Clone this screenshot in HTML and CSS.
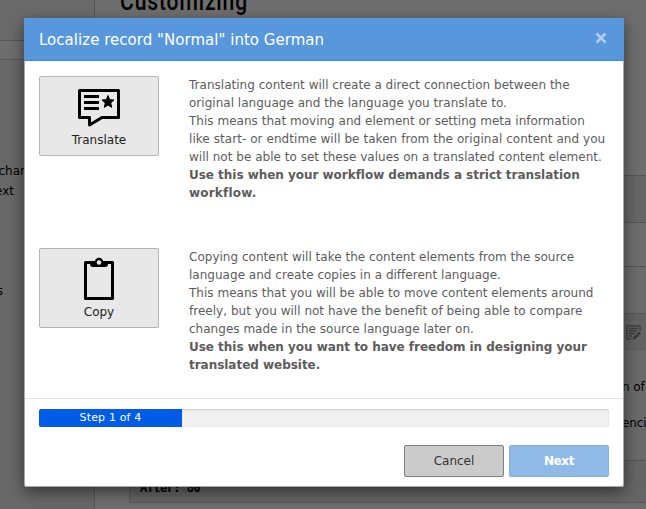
FILE: index.html
```html
<!DOCTYPE html>
<html lang="en">
<head>
<meta charset="utf-8">
<title>Localize record</title>
<link rel="stylesheet" href="styles.css">
</head>
<body>
<div class="page">
  <aside class="tree">
    <div class="tree-top"></div>
    <div class="tree-bar"></div>
    <div class="tree-list">
      <span class="tree-item item-a">char</span>
      <span class="tree-item item-b">ext</span>
      <span class="tree-item item-c">s</span>
    </div>
  </aside>
  <main class="content">
    <h1 class="page-title">Customizing</h1>
    <div class="field field-first"></div>
    <div class="field field-dark"></div>
    <div class="field field-mid"></div>
    <div class="field field-low"></div>
    <div class="toolbar">
      <svg class="edit-icon" viewBox="0 0 16 16" width="16" height="16"><path d="M1 .8h13v5M1 .8v13h4.500M3 3.500h9M3 6h8M3 8.500h6M3 11h3" fill="none" stroke="#3c3c3c" stroke-width="1.300"/><path d="M6.500 14.800 7.500 12 13 6.500 15 8.500 9.500 14Z" fill="#3c3c3c"/></svg>
    </div>
    <div class="copy"><p class="snippet">n of</p><p class="snippet">enci</p></div>
    <div class="code">After: 80</div>
  </main>
</div>
<section class="modal" role="dialog">
  <header class="modal-header">
    <h2 class="modal-title">Localize record "Normal" into German</h2>
    <svg class="close" viewBox="0 0 12 12" width="12" height="12"><path d="M1.500 1.500 10.500 10.500M10.500 1.500 1.500 10.500" stroke="#aecdef" stroke-width="2.800"/></svg>
  </header>
  <div class="modal-body">
    <div class="option">
      <button class="choice">
        <svg class="choice-icon" viewBox="0 0 48 48" width="48" height="48"><path d="M4.500 7.500h39v27H27L14.500 42v-7.500h-10Z" fill="none" stroke="#000" stroke-width="3" stroke-linejoin="round"/><path d="M9 13.500h15M9 19.500h15M9 25.500h15" stroke="#000" stroke-width="3"/><path d="m33 12.500 1.700 4.200 4.300.3-3.300 2.900 1 4.500-3.700-2.400-3.700 2.400 1-4.500-3.300-2.900 4.300-.3Z" stroke="#000"/></svg>
        <span>Translate</span>
      </button>
      <p class="description">
        <span>Translating content will create a direct connection between the</span>
        <span>original language and the language you translate to.</span>
        <span>This means that moving and element or setting meta information</span>
        <span class="wide">like start- or endtime will be taken from the original content and you</span>
        <span>will not be able to set these values on a translated content element.</span>
        <strong>Use this when your workflow demands a strict translation</strong>
        <strong class="loose">workflow.</strong>
      </p>
    </div>
    <div class="option">
      <button class="choice">
        <svg class="choice-icon" viewBox="0 0 48 48" width="48" height="48"><path d="M10.500 7.500h27v36h-27Z" fill="none" stroke="#000" stroke-width="3" stroke-linejoin="round"/><path d="M15 6h18v3q0 3-3 3H18q-3 0-3-3Z"/><circle cx="24" cy="7" r="4.200"/><circle cx="24" cy="7.500" r="2.300" fill="#e8e8e8"/></svg>
        <span>Copy</span>
      </button>
      <p class="description">
        <span>Copying content will take the content elements from the source</span>
        <span>language and create copies in a different language.</span>
        <span>This means that you will be able to move content elements around</span>
        <span>freely, but you will not have the benefit of being able to compare</span>
        <span>changes made in the source language later on.</span>
        <strong>Use this when you want to have freedom in designing your</strong>
        <strong>translated website.</strong>
      </p>
    </div>
  </div>
  <footer class="modal-footer">
    <div class="progress"><div class="progress-bar">Step 1 of 4</div></div>
    <div class="actions"><button class="btn cancel">Cancel</button><button class="btn next">Next</button></div>
  </footer>
</section>
</body>
</html>
```
FILE: styles.css
```css
* { box-sizing: border-box; }
body, h1, h2, p { margin: 0; }
body {
  width: 646px;
  height: 509px;
  overflow: hidden;
  font: 12px/18px Verdana, "DejaVu Sans", sans-serif;
  color: #000;
}
button { font: inherit; padding: 0; }
.page { display: flex; height: 509px; background: #6e6e6e; }
.tree { width: 95px; border-right: 1px solid #575757; background: #686868; }
.tree-top { height: 41px; border-bottom: 1px solid #575757; background: #6a6a6a; }
.tree-bar { height: 19px; border-bottom: 1px solid #585858; background: #6e6e6e; }
.tree-list { display: flex; flex-direction: column; align-items: flex-start; padding-top: 102px; }
.tree-item { display: flex; justify-content: flex-end; height: 18px; white-space: nowrap; }
.item-a { width: 25px; }
.item-b { width: 14px; margin-top: 2px; }
.item-c { width: 3px; margin-top: 82px; }
.content { width: 551px; overflow: hidden; }
.page-title {
  height: 28px;
  width: 200px;
  margin: -14px 0 0 25px;
  font: 500 25px/31px Roboto, sans-serif;
  letter-spacing: 1px;
  transform: scaleX(.845);
  transform-origin: left;
}
.field { border-bottom: 1px solid #555; }
.field-first { height: 162px; }
.field-dark { height: 47px; background: #666; }
.field-mid { height: 44px; }
.field-low { height: 47px; background: #6b6b6b; }
.toolbar { height: 36px; padding: 11px 0 0 531px; background: #636363; border-bottom: 1px solid #5c5c5c; }
.edit-icon { display: block; }
.copy { height: 110px; padding: 28px 0 0 527px; background: #6a6a6a; }
.snippet { height: 36px; white-space: nowrap; letter-spacing: -.1px; }
.code {
  width: 560px;
  height: 43px;
  margin-left: 34px;
  padding: 18px 0 0 10px;
  border: 1px solid #575757;
  background: #656565;
  font: bold 12px/18px "DejaVu Sans Mono", monospace;
  letter-spacing: -.55px;
}
.modal {
  position: absolute;
  left: 24px;
  top: 18px;
  display: flex;
  flex-direction: column;
  width: 600px;
  height: 469px;
  border: 1px solid #aaa;
  border-top: 0;
  border-radius: 2px;
  background: #fff;
  background-clip: padding-box;
  box-shadow: 0 5px 15px rgba(0, 0, 0, .5);
}
.modal-header {
  display: flex;
  align-items: flex-start;
  justify-content: space-between;
  height: 43px;
  margin: 0 -1px;
  padding: 12px 17px 0 15px;
  border-bottom: 1px solid #3f87d4;
  border-radius: 2px 2px 0 0;
  background: #5897db;
}
.modal-title { font-size: 15px; font-weight: 400; line-height: 20px; letter-spacing: .03px; color: #fff; white-space: nowrap; }
.close { margin-top: 2px; }
.modal-body { display: flex; flex-direction: column; gap: 46px; height: 337px; padding: 15px 14px 0; }
.option { display: flex; gap: 30px; height: 126px; }
.choice {
  display: flex;
  flex: 0 0 120px;
  flex-direction: column;
  align-items: center;
  height: 80px;
  padding-top: 6px;
  border: 1px solid #b5b5b5;
  border-radius: 2px;
  background: #e8e8e8;
  color: #222;
}
.choice-icon { display: block; }
.description { color: #5c5c5c; white-space: nowrap; }
.description span, .description strong { display: block; }
.description span { letter-spacing: .02px; }
.description .wide { letter-spacing: .06px; }
.description strong { letter-spacing: -.03px; }
.description .loose { letter-spacing: .2px; }
.modal-footer { height: 88px; padding: 10px 14px 0; border-top: 1px solid #e2e2e2; }
.progress { height: 18px; border-radius: 2px; background: #f0f0f0; box-shadow: inset 0 1px 2px rgba(0, 0, 0, .15); overflow: hidden; }
.progress-bar { width: 143px; height: 18px; background: #005ce6; color: #fff; font-size: 11px; letter-spacing: .15px; text-align: center; }
.actions { display: flex; justify-content: flex-end; gap: 5px; margin-top: 18px; }
.btn { width: 100px; height: 32px; border-radius: 2px; }
.cancel { border: 1px solid #808080; background: #cbcbcb; color: #333; }
.next { border: 1px solid #85b2e2; background: #8fbae8; color: #fff; font-weight: 700; letter-spacing: -.4px; }
```
